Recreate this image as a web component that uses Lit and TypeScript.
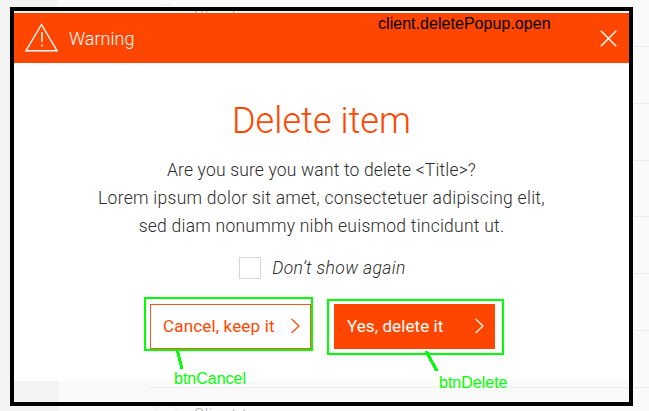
import { LitElement, html, css } from "lit";
import { customElement } from "lit/decorators.js";

@customElement("app-root")
export class AppRoot extends LitElement {
  static styles = css`
    :host { display: block; position: relative; width: 649px; height: 411px; overflow: hidden; background: #fafafa; font-family: Roboto, sans-serif; font-weight: 300; }
    .page { position: absolute; inset: 0; display: flex; }
    .side { width: 58px; background: #f3f3f3; }
    .list { flex: 1; position: relative; }
    .rows { margin-left: 91px; padding-top: 46px; display: flex; flex-direction: column; gap: 55.8px; }
    .rows i { height: 1px; background: #ececec; flex: none; }
    .ghost { position: absolute; left: 95px; width: 24px; height: 24px; border: 1px solid #ebebeb; border-radius: 50%; }
    .client { position: absolute; left: 136px; font-size: 15px; line-height: 18px; letter-spacing: 1px; color: #aaa; }
    .g1 { top: 4px; } .g2 { top: 403px; }
    .c1 { top: 7px; } .c2 { top: 405px; }
    .frame { position: absolute; left: 10px; top: 7px; width: 615px; height: 391px; border: 4px solid #000; display: flex; flex-direction: column; }
    .modal { margin-top: 2px; height: 368px; background: #fff; color: #2c2c2c; display: flex; flex-direction: column; align-items: center; }
    header { align-self: stretch; height: 50px; flex: none; background: #ff4600; color: #fff; display: flex; align-items: center; padding: 0 12px 0 11px; box-sizing: border-box; }
    .warn { margin-top: -2px; }
    .title { margin-left: 11px; font-size: 18px; flex: 1; }
    h1 { margin: 35px 0 0; font-weight: 300; font-size: 36px; line-height: 46px; color: #ff4600; letter-spacing: 0.1px; }
    .copy { margin-top: 12px; text-align: center; font-size: 17.5px; line-height: 28px; white-space: nowrap; }
    .copy div { height: 28px; }
    .l1 { letter-spacing: 0.16px; } .l2 { letter-spacing: 0.27px; } .l3 { letter-spacing: 0.24px; }
    .check { margin: 16px 0 0 2px; display: flex; align-items: center; gap: 11px; height: 23px; font-size: 17.5px; font-style: italic; letter-spacing: 0.4px; }
    .box { width: 20px; height: 20px; border: 1px solid #d4d4d4; }
    .buttons { display: flex; gap: 23px; margin: 25px 0 0 2px; }
    button { all: unset; box-sizing: border-box; width: 161px; height: 45px; display: flex; align-items: center; justify-content: space-between; padding: 0 11px 2px 13px; font-size: 17px; font-weight: 400; letter-spacing: 0.08px; white-space: nowrap; color: #fff; background: #ff4600; }
    .cancel { border: 1px solid #f35a20; padding: 0 10px 2px 12px; letter-spacing: 0.16px; color: #ff4600; background: #fff; }
    svg { display: block; flex: none; }
    .mark { position: absolute; box-sizing: border-box; border: 2px solid #0f0; }
    .m1 { left: 144px; top: 297px; width: 169px; height: 54px; }
    .m2 { left: 327px; top: 299px; width: 177px; height: 56px; }
    .lines { position: absolute; left: 0; top: 0; }
    .note { position: absolute; font: 16px/20px "Liberation Sans", sans-serif; color: #0f0; white-space: nowrap; }
    .n0 { left: 378px; top: 14px; color: #000; letter-spacing: 0.04px; }
    .n1 { left: 174px; top: 369px; }
    .n2 { left: 439px; top: 373px; }
  `;

  chevron() {
    return html`<svg width="9" height="16" viewBox="0 0 9 16" fill="none" stroke="currentColor" stroke-width="1.2"><path d="M.6 1 8 8 .6 15" /></svg>`;
  }

  render() {
    return html`
      <div class="page">
        <div class="side"></div>
        <div class="list">
          <div class="rows">${[0, 1, 2, 3, 4, 5, 6].map(() => html`<i></i>`)}</div>
          <span class="ghost g1"></span><span class="client c1">Client</span>
          <span class="ghost g2"></span><span class="client c2">Client t</span>
        </div>
      </div>
      <div class="frame">
        <section class="modal">
          <header>
            <svg class="warn" width="33" height="29" viewBox="0 0 33 29" fill="none" stroke="#fff" stroke-width="1.4"><path d="M16.5 1.5 32 27.7H1ZM17 9v10M17 21.5v2" /></svg>
            <span class="title">Warning</span>
            <svg width="17" height="17" viewBox="0 0 17 17" stroke="#fff" stroke-width="1.4"><path d="m.8.8 15.4 15.4m0-15.4L.8 16.2" /></svg>
          </header>
          <h1>Delete item</h1>
          <div class="copy">
            <div class="l1">Are you sure you want to delete &lt;Title&gt;?</div>
            <div class="l2">Lorem ipsum dolor sit amet, consectetuer adipiscing elit,</div>
            <div class="l3">sed diam nonummy nibh euismod tincidunt ut.</div>
          </div>
          <label class="check"><span class="box"></span><span>Don’t show again</span></label>
          <div class="buttons">
            <button class="cancel"><span>Cancel, keep it</span>${this.chevron()}</button>
            <button><span>Yes, delete it</span>${this.chevron()}</button>
          </div>
        </section>
      </div>
      <div class="mark m1"></div>
      <div class="mark m2"></div>
      <svg class="lines" width="649" height="411" stroke="#0f0" stroke-width="3" shape-rendering="crispEdges"><path d="M177 349l5 20M426 351l11 20" /></svg>
      <span class="note n0">client.deletePopup.open</span>
      <span class="note n1">btnCancel</span>
      <span class="note n2">btnDelete</span>
    `;
  }
}
